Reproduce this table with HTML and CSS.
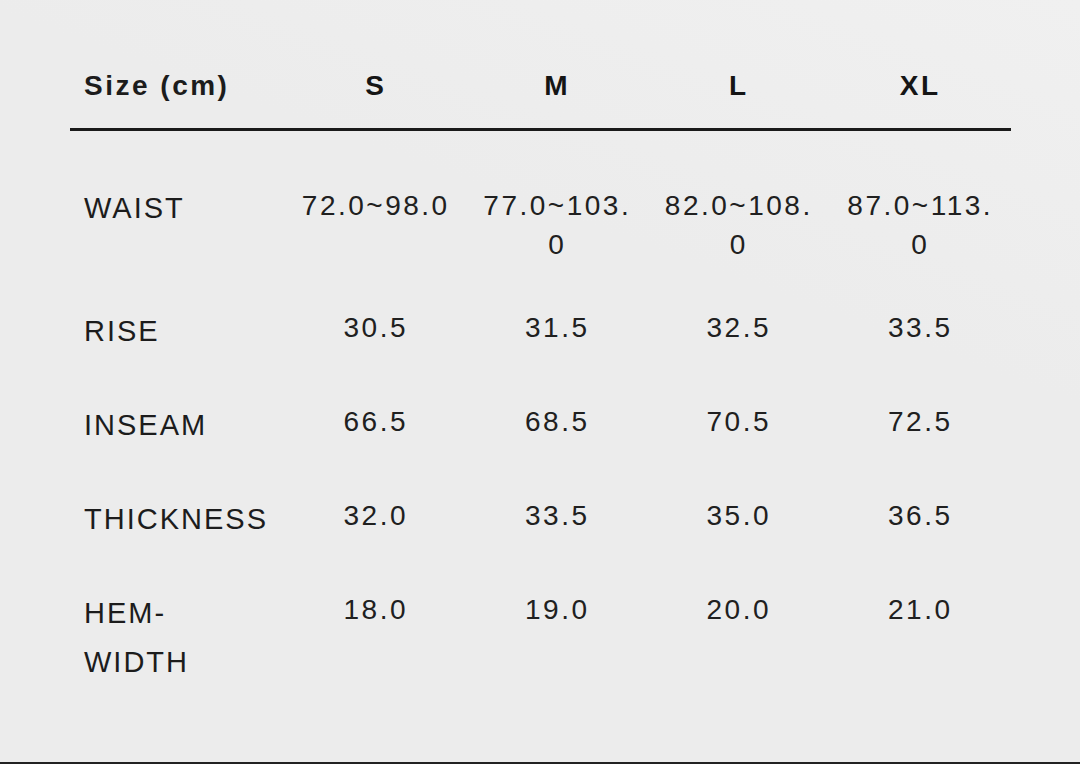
FILE: index.html
```html
<!DOCTYPE html>
<html>
<head>
<meta charset="utf-8">
<link rel="stylesheet" href="styles.css">
</head>
<body>
<div class="page">
  <table class="size-table">
    <colgroup>
      <col class="col-label">
      <col class="col-size">
      <col class="col-size">
      <col class="col-size">
      <col class="col-size">
    </colgroup>
    <thead>
      <tr>
        <th class="label">Size (cm)</th>
        <th>S</th>
        <th>M</th>
        <th>L</th>
        <th>XL</th>
      </tr>
    </thead>
    <tbody>
      <tr>
        <td class="label">WAIST</td>
        <td>72.0~98.0</td>
        <td>77.0~103.0</td>
        <td>82.0~108.0</td>
        <td>87.0~113.0</td>
      </tr>
      <tr>
        <td class="label">RISE</td>
        <td>30.5</td>
        <td>31.5</td>
        <td>32.5</td>
        <td>33.5</td>
      </tr>
      <tr>
        <td class="label">INSEAM</td>
        <td>66.5</td>
        <td>68.5</td>
        <td>70.5</td>
        <td>72.5</td>
      </tr>
      <tr>
        <td class="label">THICKNESS</td>
        <td>32.0</td>
        <td>33.5</td>
        <td>35.0</td>
        <td>36.5</td>
      </tr>
      <tr>
        <td class="label">HEM-<br>WIDTH</td>
        <td>18.0</td>
        <td>19.0</td>
        <td>20.0</td>
        <td>21.0</td>
      </tr>
    </tbody>
  </table>
</div>
</body>
</html>
```

FILE: styles.css
```css
html, body {
  margin: 0;
  padding: 0;
}

body {
  background: #ececec;
  font-family: "Liberation Sans", Arial, sans-serif;
  color: #1c1c1c;
}

.page {
  box-sizing: border-box;
  height: 764px;
  padding: 66px 0 0 70px;
  border-bottom: 2px solid #222;
  background: linear-gradient(200deg, #f0f0f0 0%, #ececec 35%, #ececec 100%);
  overflow: hidden;
}

.size-table {
  width: 941px;
  table-layout: fixed;
  border-collapse: collapse;
  border-spacing: 0;
  font-size: 28px;
  letter-spacing: 2.5px;
}

.col-label {
  width: 215px;
}

.col-size {
  width: 181.5px;
}

.size-table th {
  font-weight: bold;
  color: #151515;
  line-height: 40px;
  padding: 0 0 22px;
  text-align: center;
  border-bottom: 3px solid #1a1a1a;
}

.size-table td {
  vertical-align: top;
  text-align: center;
  line-height: 39px;
  padding: 24px 12px 20px;
  word-break: break-all;
  color: #202020;
}

.size-table tbody tr:first-child td {
  padding-top: 55px;
}

.size-table .label {
  text-align: left;
  padding: 23px 0 22px 14px;
  font-size: 29px;
  line-height: 49px;
  letter-spacing: 2px;
  word-break: normal;
  color: #1c1c1c;
}

.size-table tbody tr:first-child td.label {
  padding-top: 53px;
}

.size-table th.label {
  padding: 0 0 22px 14px;
  font-size: 28px;
  line-height: 40px;
  letter-spacing: 2.5px;
}
```
